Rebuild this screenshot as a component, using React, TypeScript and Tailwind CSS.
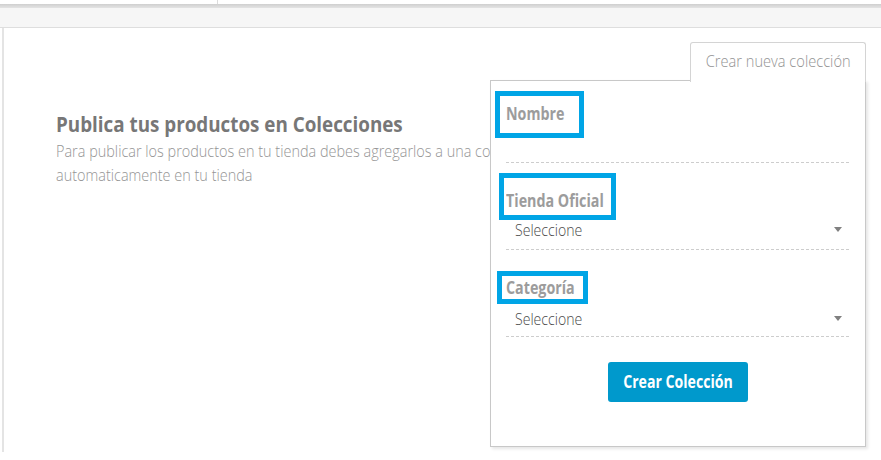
import React from "react";

const font = { fontFamily: '"Open Sans", "Liberation Sans", sans-serif' };

function Dashed() {
  return (
    <div className="h-px w-full bg-[linear-gradient(to_right,#cdcdcd_60%,transparent_60%)] bg-[length:5px_1px] bg-repeat-x" />
  );
}

function Label({ text }: { text: string }) {
  return (
    <div className="h-[24px] leading-[24px] whitespace-nowrap">
      <span className="inline-block origin-left scale-x-[0.84] font-bold text-[17px] text-[#9c9c9c]">{text}</span>
    </div>
  );
}

function SelectRow({ top }: { top: string }) {
  return (
    <div className="flex flex-col">
      <div className={`h-[36px] flex items-start justify-between pl-[9px] pr-[8px] ${top}`}>
        <span className="inline-block origin-left scale-x-[0.88] text-[16px] leading-[22px] font-light text-[#4a4a4a] whitespace-nowrap">
          Seleccione
        </span>
        <svg className="mt-[8px]" width="8" height="5" viewBox="0 0 8 5">
          <path d="M0 0h8L4 5z" fill="#808080" />
        </svg>
      </div>
      <Dashed />
    </div>
  );
}

export default function App() {
  return (
    <div className="w-[881px] h-[460px] bg-white relative overflow-hidden" style={font}>
      <div className="h-[4px] bg-white relative">
        <div className="absolute left-[217px] top-0 w-px h-[4px] bg-[#dcdcdc]" />
      </div>
      <div className="h-[4px] bg-gradient-to-b from-[#cfcfcf] to-[#e4e4e4]" />
      <div className="h-[20px] bg-[#f6f6f6] border-b border-[#dedede]" />
      <div className="ml-[2px] h-[424px] border-l-[2px] border-[#e4e4e4] bg-white">
        <div className="pl-[52px] pt-[80px]">
          <h1 className="h-[30px] leading-[30px] whitespace-nowrap">
            <span className="inline-block origin-left scale-x-[0.855] text-[22px] font-bold text-[#777777]">
              Publica tus productos en Colecciones
            </span>
          </h1>
          <p className="mt-[1px] text-[17px] font-light text-[#959595] leading-[24px] whitespace-nowrap origin-left scale-x-[0.85] w-[700px]">
            Para publicar los productos en tu tienda debes agregarlos a una colección y estos se mostrarán
            <br />
            automaticamente en tu tienda
          </p>
        </div>
      </div>

      {/* Tab */}
      <div className="absolute left-[690px] top-[42px] w-[176px] h-[40px] bg-white border border-b-0 border-[#d4d4d4] rounded-t-[3px] flex justify-center z-10 pt-[4px]">
        <span className="inline-block scale-x-[0.86] text-[17px] leading-[28px] font-light text-[#939393] whitespace-nowrap">
          Crear nueva colección
        </span>
      </div>

      {/* Panel */}
      <div className="absolute left-[490px] top-[80px] w-[376px] h-[367px] bg-white border border-[#c8c8c8] shadow-[2px_2px_3px_rgba(0,0,0,0.10)] flex flex-col pt-[21px] px-[15px]">
        <div className="absolute left-[200px] -top-px w-[174px] h-[2px] bg-white" />
        <Label text="Nombre" />
        <div className="h-[36px]" />
        <Dashed />
        <div className="h-[26px]" />
        <Label text="Tienda Oficial" />
        <SelectRow top="pt-[6px]" />
        <div className="h-[26px]" />
        <Label text="Categoría" />
        <SelectRow top="pt-[8px]" />
        <div className="flex justify-center mt-[25px]">
          <button className="w-[140px] h-[40px] bg-[#0099cc] rounded-[3px] flex items-center justify-center">
            <span className="inline-block scale-x-[0.83] text-white font-bold text-[17px] leading-[24px] whitespace-nowrap">
              Crear Colección
            </span>
          </button>
        </div>
      </div>

      {/* Annotation highlight boxes */}
      <div className="absolute left-[495px] top-[91px] w-[89px] h-[47px] border-[5px] border-[#00a5e6] z-20" />
      <div className="absolute left-[499px] top-[173px] w-[117px] h-[47px] border-[5px] border-[#00a5e6] z-20" />
      <div className="absolute left-[497px] top-[271px] w-[91px] h-[33px] border-[5px] border-[#00a5e6] z-20" />
    </div>
  );
}
